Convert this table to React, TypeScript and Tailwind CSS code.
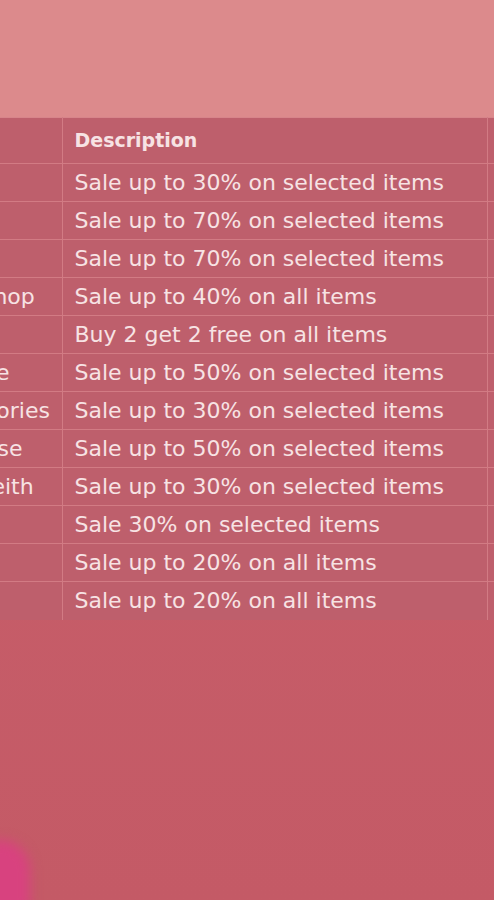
import React from 'react';

type Deal = { store: string; description: string };

const deals: Deal[] = [
  { store: 'Zara', description: 'Sale up to 30% on selected items' },
  { store: 'Puma', description: 'Sale up to 70% on selected items' },
  { store: 'H&M', description: 'Sale up to 70% on selected items' },
  { store: 'Card Shop', description: 'Sale up to 40% on all items' },
  { store: 'Nike', description: 'Buy 2 get 2 free on all items' },
  { store: 'Lingerie', description: 'Sale up to 50% on selected items' },
  { store: 'Accessories', description: 'Sale up to 30% on selected items' },
  { store: 'Red Rose', description: 'Sale up to 50% on selected items' },
  { store: 'Tony Keith', description: 'Sale up to 30% on selected items' },
  { store: 'Asos', description: 'Sale 30% on selected items' },
  { store: 'Gap', description: 'Sale up to 20% on all items' },
  { store: 'Vans', description: 'Sale up to 20% on all items' },
];

const App: React.FC = () => {
  return (
    <div
      className="relative h-[900px] w-full overflow-hidden bg-gradient-to-b from-[#c9616c] to-[#c45a66] text-[#f7e3e4]"
      style={{ fontFamily: '"DejaVu Sans", "Open Sans", sans-serif' }}
    >
      {/* Top band */}
      <div className="h-[117px] bg-[#dc8a8c]" />

      {/* Table, scrolled horizontally */}
      <div className="overflow-hidden">
        <table className="-ml-[91px] w-[778px] table-fixed border-collapse bg-[#be5f6c] text-[22px]">
          <thead>
            <tr className="h-[46px] border-t border-[#d7848a]">
              <th className="w-[153px] border-r border-[#d27b84] px-3 text-left font-bold" />
              <th className="w-[425px] border-r border-[#d27b84] px-3 text-left text-[19px] font-bold">Description</th>
              <th className="w-[200px] px-3" />
            </tr>
          </thead>
          <tbody>
            {deals.map((d) => (
              <tr key={d.store} className="h-[38px] border-t border-[#d27b84]">
                <td className="whitespace-nowrap border-r border-[#d27b84] px-3">{d.store}</td>
                <td className="whitespace-nowrap border-r border-[#d27b84] px-3">{d.description}</td>
                <td className="px-3" />
              </tr>
            ))}
          </tbody>
        </table>
      </div>

      {/* Glow in the bottom-left corner */}
      <div className="absolute -bottom-[30px] -left-[30px] h-[90px] w-[60px] rounded-full bg-[#d8427f] blur-[6px]" />
    </div>
  );
};

export default App;
